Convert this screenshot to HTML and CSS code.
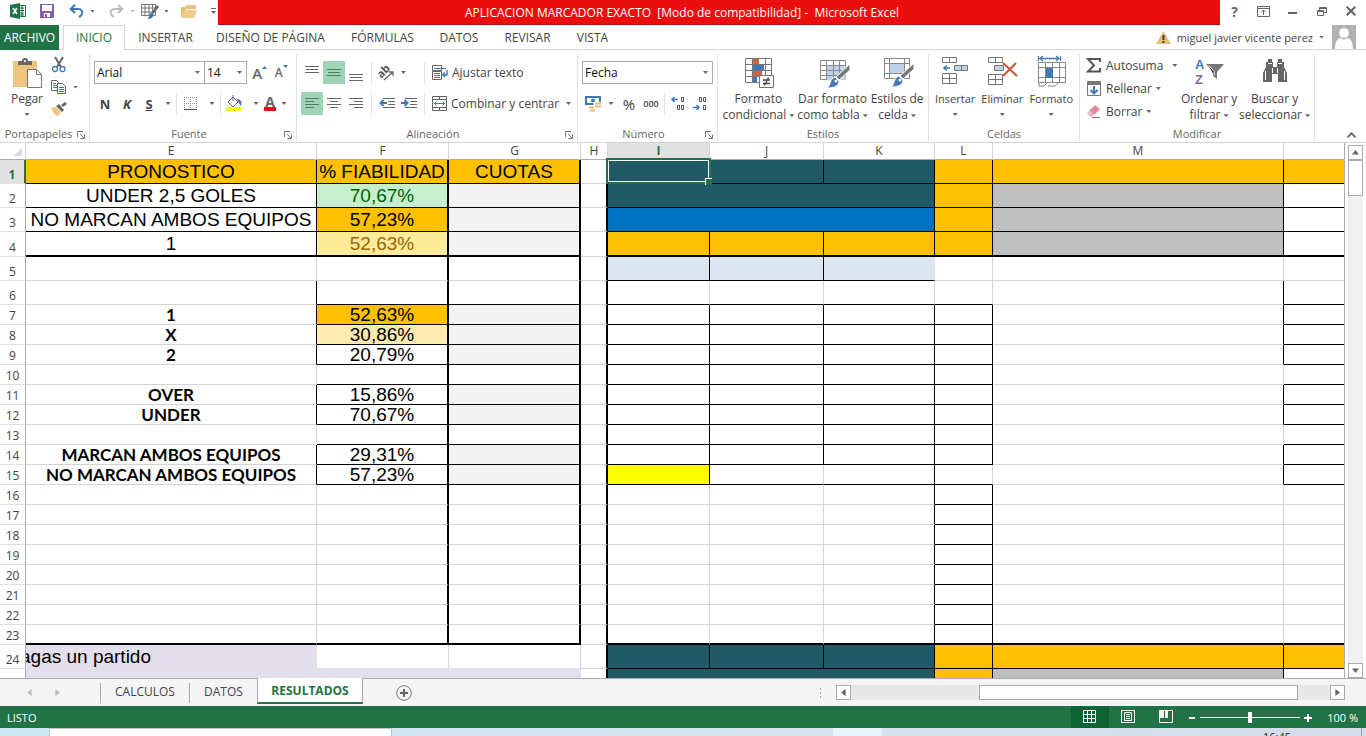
FILE: index.html
```html
<!DOCTYPE html>
<html lang="es">
<head>
<meta charset="utf-8">
<title>APLICACION MARCADOR EXACTO - Microsoft Excel</title>
<link rel="stylesheet" href="styles.css">
</head>
<body>
<div class="app">
  <header class="titlebar">
    <div class="qat">
      <button type="button" aria-label="Excel"><svg width="17" height="16" viewBox="0 0 17 16"><path fill="#fff" stroke="#217346" d="M8.500 2.500h7v11h-7z"/><path stroke="#217346" d="M10 5h4M10 7.500h4M10 10h4M10 12h4M12 3v10"/><path fill="#217346" d="M0 2l10-2v16L0 14z"/><path stroke="#fff" stroke-width="1.600" d="M3 5l4 6M7 5l-4 6"/></svg></button>
      <button type="button" aria-label="Guardar"><svg width="14" height="14" viewBox="0 0 14 14"><path fill="#8b5fa8" d="M0 0h14v14H0z"/><path fill="#fff" d="M2 1h10v6H2zM4 9h6v4H4z"/><path fill="#8b5fa8" d="M5 10h2v3H5z"/></svg></button>
      <button type="button" aria-label="Deshacer"><svg width="16" height="14" viewBox="0 0 16 14"><path fill="none" stroke="#3f78b5" stroke-width="2" d="M2 5h7c4 0 5 3 4 5s-3 3-3 3M6 .7L1.700 5 6 9"/></svg><i class="arr"></i></button>
      <button type="button" aria-label="Rehacer"><svg width="16" height="14" viewBox="0 0 16 14"><path fill="none" stroke="#bdbdbd" stroke-width="2" d="M13 5H6C2 5 1 8 2 10s3 3 3 3M9 .7L13.300 5 9 9"/></svg><i class="arr pale"></i></button>
      <button type="button" aria-label="Tabla"><svg width="18" height="17" viewBox="0 0 18 17"><path fill="#fff" stroke="#777" d="M.5 1.500h14v11H.5zM.5 5h14M.5 9h14M4 1.500v11M8 1.500v11M11.500 1.500v11"/><path fill="#666" d="M16 2l2 2-6 7-2-1z"/><path fill="#3f78b5" d="M9.500 10l3 1c0 4-3 5-6 5 2-1 1-4 3-6z"/></svg><i class="arr"></i></button>
      <button type="button" aria-label="Abrir"><svg width="17" height="13" viewBox="0 0 17 13"><path fill="#e9c078" d="M0 13V2h4l2-2h9v4H5z"/><path fill="#f0cd8d" d="M4 5h12l-3 8H0z"/></svg></button>
      <button type="button" aria-label="Personalizar"><svg width="6" height="8" viewBox="0 0 6 8"><path fill="#666" d="M0 1h5v1H0zM0 4h5L2.500 7z"/></svg></button>
    </div>
    <h1 class="title">APLICACION MARCADOR EXACTO&nbsp; [Modo de compatibilidad] -&nbsp; Microsoft Excel</h1>
    <div class="winbtns">
      <button type="button" class="help">?</button>
      <button type="button" aria-label="Opciones de cinta"><svg width="13" height="11" viewBox="0 0 13 11"><path fill="none" stroke="#666" d="M.5.5h12v10H.5zM.5 2.500h12M6.500 9V4M4 6.500L6.500 4 9 6.500"/></svg></button>
      <button type="button" aria-label="Minimizar"><svg width="10" height="10" viewBox="0 0 10 10"><path fill="#666" d="M0 6h9v2H0z"/></svg></button>
      <button type="button" aria-label="Restaurar"><svg width="10" height="10" viewBox="0 0 10 10"><path fill="none" stroke="#666" d="M.5 4.500h6v5h-6zM.5 5.500h6M2.500 4V1.500h7v5H7M2.500 2.500h7"/></svg></button>
      <button type="button" aria-label="Cerrar"><svg width="10" height="10" viewBox="0 0 10 10"><path stroke="#666" stroke-width="2" d="M.7.7l8.600 8.600M9.300.7L.7 9.300"/></svg></button>
    </div>
  </header>

  <nav class="tabs">
    <div class="tablist">
      <a class="file" href="#archivo">ARCHIVO</a>
      <a class="active" href="#inicio">INICIO</a>
      <a href="#insertar">INSERTAR</a>
      <a href="#diseno">DISEÑO DE PÁGINA</a>
      <a href="#formulas">FÓRMULAS</a>
      <a href="#datos">DATOS</a>
      <a href="#revisar">REVISAR</a>
      <a href="#vista">VISTA</a>
    </div>
    <div class="account">
      <svg width="15" height="13" viewBox="0 0 15 13"><path fill="#e8bf77" d="M7.500 0L15 13H0z"/><path fill="#444" d="M6.500 4h2v5h-2zM6.500 10h2v2h-2z"/></svg>
      <span>miguel javier vicente perez</span><i class="arr"></i>
      <svg class="avatar" width="24" height="24" viewBox="0 0 24 24"><path fill="#b1b1b1" d="M0 0h24v24H0z"/><circle cx="12" cy="8" r="5" fill="#fff"/><path fill="#fff" d="M3 24c0-8 3-11 6-11l3 2 3-2c3 0 6 3 6 11z"/></svg>
    </div>
  </nav>

  <section class="ribbon">
    <div class="group clip">
      <div class="body">
        <button type="button" class="big"><svg width="29" height="31" viewBox="0 0 29 31"><path fill="#ecc57f" d="M0 3h24v26H0z"/><path fill="#666" d="M5 7V3h4a3 3 0 0 1 6 0h4v4z"/><circle cx="12" cy="3" r="1" fill="#fff"/><path fill="#fff" stroke="#777" d="M14.500 11.500h9l5 5v13h-14zM23.500 11.500v5h5"/></svg><span>Pegar</span><i class="arr"></i></button>
        <div class="smalls">
          <button type="button" aria-label="Cortar"><svg width="16" height="16" viewBox="0 0 16 16"><path stroke="#666" stroke-width="2" d="M4 0l6 10M12 0L6 10"/><circle cx="4" cy="12" r="2.500" fill="none" stroke="#3f78b5" stroke-width="1.300"/><circle cx="11.500" cy="12" r="2.500" fill="none" stroke="#3f78b5" stroke-width="1.300"/></svg></button>
          <button type="button" aria-label="Copiar"><svg width="16" height="14" viewBox="0 0 16 14"><path fill="#fff" stroke="#666" d="M.5.5h5l2 2v8h-7z"/><path stroke="#3f78b5" d="M2 3.500h3M2 5.500h4M2 7.500h4"/><path fill="#fff" stroke="#666" d="M6.500 3.500h5l3 3v7h-8z"/><path stroke="#3f78b5" d="M8 7.500h5M8 9.500h5M8 11.500h5"/></svg><i class="arr"></i></button>
          <button type="button" aria-label="Copiar formato"><svg width="16" height="14" viewBox="0 0 16 14"><path fill="#edc680" d="M0 6l5-1 5 5-3 4-4-2z"/><path fill="#666" d="M5 4l3-2 5 6-2 2zM10 3l4-3 2 2-4 3z"/></svg></button>
        </div>
      </div>
      <div class="cap"><span>Portapapeles</span><svg class="launch" viewBox="0 0 8 8"><path fill="none" stroke="#777" d="M.5 6V.5H6M3 3l4 4M7.500 3.500v4h-4"/></svg></div>
    </div>

    <div class="group font">
      <div class="body rows">
        <div class="row combos">
          <label class="sel name"><select aria-label="Fuente"><option>Arial</option></select></label>
          <label class="sel size"><select aria-label="Tamaño"><option>14</option></select></label>
          <button type="button" class="grow" aria-label="Aumentar">A<svg width="5" height="3" viewBox="0 0 5 3"><path fill="#3f78b5" d="M0 3h5L2.500 0z"/></svg></button>
          <button type="button" class="grow less" aria-label="Disminuir">A<svg width="5" height="3" viewBox="0 0 5 3"><path fill="#3f78b5" d="M0 0h5L2.500 3z"/></svg></button>
        </div>
        <div class="row">
          <button type="button" class="ib"><b>N</b></button>
          <button type="button" class="ib"><b><em>K</em></b></button>
          <button type="button" class="ib"><b><u>S</u></b></button>
          <button type="button" class="ab"><i class="arr"></i></button>
          <span class="sep"></span>
          <button type="button" class="ib wide" aria-label="Bordes"><svg width="13" height="13" viewBox="0 0 13 13"><path fill="none" stroke="#888" stroke-dasharray="1 1" d="M.5 0v12M6.500 0v12M0 .5h13M0 6.500h13M12.500 0v12"/><path stroke="#555" d="M0 12.500h13"/></svg></button>
          <button type="button" class="ab"><i class="arr"></i></button>
          <span class="sep"></span>
          <button type="button" class="ib wide" aria-label="Relleno"><svg width="17" height="17" viewBox="0 0 17 17"><path fill="#fff" stroke="#666" d="M2 7l5-5 5 5-5 5zM7 6V0"/><path fill="#3f78b5" d="M11 4c4 0 5 3 4 7l-3-4z"/><path fill="#ffff28" d="M0 12h16v4H0z"/></svg></button>
          <button type="button" class="ab"><i class="arr"></i></button>
          <button type="button" class="fc" aria-label="Color de fuente">A</button>
          <button type="button" class="ab"><i class="arr"></i></button>
        </div>
      </div>
      <div class="cap"><span>Fuente</span><svg class="launch" viewBox="0 0 8 8"><path fill="none" stroke="#777" d="M.5 6V.5H6M3 3l4 4M7.500 3.500v4h-4"/></svg></div>
    </div>

    <div class="group align">
      <div class="body rows">
        <div class="row">
          <button type="button" class="ib" aria-label="Arriba"><svg width="14" height="16" viewBox="0 0 14 16"><path stroke="#666" d="M0 1.500h14M1 4.500h12M0 7.500h14"/></svg></button>
          <button type="button" class="ib on" aria-label="Medio"><svg width="14" height="16" viewBox="0 0 14 16"><path stroke="#557766" d="M0 4.500h14M1 7.500h12M0 10.500h14"/></svg></button>
          <button type="button" class="ib" aria-label="Abajo"><svg width="14" height="16" viewBox="0 0 14 16"><path stroke="#666" d="M0 9.500h14M1 12.500h12M0 15.500h14"/></svg></button>
          <span class="sep"></span>
          <button type="button" class="ori" aria-label="Orientación"><svg width="17" height="16" viewBox="0 0 17 16"><text x="0" y="10" transform="rotate(-45 6 8)" font-size="11" font-weight="700" fill="#555">ab</text><path fill="none" stroke="#666" stroke-width="1.300" d="M6 15l9-8M11 7h4v4"/></svg><i class="arr"></i></button>
          <span class="sep"></span>
          <button type="button" class="txt"><svg width="16" height="16" viewBox="0 0 16 16"><path fill="#fff" stroke="#666" d="M.5 5.500v-5h9v5zM.5 6.500h9v8h-9z"/><path stroke="#3f78b5" d="M2 3.500h12M2 8.500h6M2 10.500h6M2 12.500h6"/><path fill="none" stroke="#3f78b5" stroke-width="1.400" d="M15 5v5h-4M13 7.500L10.700 10l2.300 2"/></svg>Ajustar texto</button>
        </div>
        <div class="row">
          <button type="button" class="ib on" aria-label="Izquierda"><svg width="14" height="11" viewBox="0 0 14 11"><path stroke="#557766" d="M0 .5h14M0 3.500h9M0 6.500h14M0 9.500h9"/></svg></button>
          <button type="button" class="ib" aria-label="Centro"><svg width="14" height="11" viewBox="0 0 14 11"><path stroke="#666" d="M0 .5h14M3 3.500h8M0 6.500h14M3 9.500h8"/></svg></button>
          <button type="button" class="ib" aria-label="Derecha"><svg width="14" height="11" viewBox="0 0 14 11"><path stroke="#666" d="M0 .5h14M5 3.500h9M0 6.500h14M5 9.500h9"/></svg></button>
          <span class="sep"></span>
          <button type="button" class="ib" aria-label="Disminuir sangría"><svg width="16" height="11" viewBox="0 0 16 11"><path stroke="#666" d="M4 .5h12M9 3.500h7M9 6.500h7M4 9.500h12"/><path fill="none" stroke="#3f78b5" stroke-width="2" d="M8 5H2M4.500 2L1.500 5l3 3"/></svg></button>
          <button type="button" class="ib" aria-label="Aumentar sangría"><svg width="16" height="11" viewBox="0 0 16 11"><path stroke="#666" d="M4 .5h12M9 3.500h7M9 6.500h7M4 9.500h12"/><path fill="none" stroke="#3f78b5" stroke-width="2" d="M0 5h6M3.500 2l3 3-3 3"/></svg></button>
          <span class="sep"></span>
          <button type="button" class="txt"><svg width="15" height="15" viewBox="0 0 15 15"><path fill="none" stroke="#666" d="M.5.5h14v14H.5zM.5 3.500h14M.5 11.500h14M7.500.5v3M7.500 11.500v3"/><path fill="none" stroke="#3f78b5" d="M2 7.500h11M4.500 5.500l-2 2 2 2M10.500 5.500l2 2-2 2"/></svg>Combinar y centrar<i class="arr"></i></button>
        </div>
      </div>
      <div class="cap"><span>Alineación</span><svg class="launch" viewBox="0 0 8 8"><path fill="none" stroke="#777" d="M.5 6V.5H6M3 3l4 4M7.500 3.500v4h-4"/></svg></div>
    </div>

    <div class="group num">
      <div class="body rows">
        <div class="row"><label class="sel fmt"><select aria-label="Formato de número"><option>Fecha</option></select></label></div>
        <div class="row">
          <button type="button" class="ib" aria-label="Moneda"><svg width="17" height="16" viewBox="0 0 17 16"><path fill="#fff" stroke="#3f78b5" stroke-width="2" d="M1 1h14v7H1z"/><circle cx="8" cy="4.500" r="2" fill="#3f78b5"/><path fill="#fff" d="M8 6h9v3H5v7h5z"/><path stroke="#e6b970" stroke-width="2" d="M10 7.500h6M10 10.500h6M4 11.500h5M5 14.500h5"/></svg></button>
          <button type="button" class="ab"><i class="arr"></i></button>
          <button type="button" class="ib pct">%</button>
          <button type="button" class="ib mil">000</button>
          <span class="sep"></span>
          <button type="button" class="ib dec" aria-label="Aumentar decimales"><svg width="15" height="15" viewBox="0 0 15 15"><path fill="none" stroke="#3f78b5" stroke-width="1.500" d="M7 3.500H1M3.500 1L1 3.500 3.500 6"/><path fill="none" stroke="#555" d="M10.500 1.500h2v4h-2zM6.500 9.500h2v4h-2zM10.500 9.500h2v4h-2z"/></svg></button>
          <button type="button" class="ib dec" aria-label="Disminuir decimales"><svg width="15" height="15" viewBox="0 0 15 15"><path fill="none" stroke="#3f78b5" stroke-width="1.500" d="M0 11.500h6M3.500 9L6 11.500 3.500 14"/><path fill="none" stroke="#555" d="M6.500 1.500h2v4h-2zM10.500 1.500h2v4h-2zM10.500 9.500h2v4h-2z"/></svg></button>
        </div>
      </div>
      <div class="cap"><span>Número</span><svg class="launch" viewBox="0 0 8 8"><path fill="none" stroke="#777" d="M.5 6V.5H6M3 3l4 4M7.500 3.500v4h-4"/></svg></div>
    </div>

    <div class="group styles">
      <div class="body">
        <button type="button" class="big"><svg width="31" height="31" viewBox="0 0 31 31"><path fill="#fff" stroke="#777" d="M1.500.5h26v24h-26zM1.500 6.500h26M1.500 12.500h26M1.500 18.500h26M8.500.5v24M21.500.5v24"/><path fill="#cf6347" d="M9 1h6v5H9zM9 13h9v5H9z"/><path fill="#3f78b5" d="M9 7h11v5H9zM9 19h4v5H9z"/><path fill="#fff" stroke="#777" d="M15.500 17.500h14v12h-14z"/><path stroke="#444" stroke-width="1.300" d="M19 22h7M19 25.500h7M24.500 19.500l-4 8"/></svg><span>Formato</span><span>condicional <i class="arr"></i></span></button>
        <button type="button" class="big"><svg width="31" height="31" viewBox="0 0 31 31"><path fill="#fff" stroke="#888" d="M1.500 2.500h25v19h-25z"/><path fill="#bdd2e8" d="M8 8h19v14H8z"/><path fill="none" stroke="#888" d="M1.500 7.500h25M1.500 12.500h25M1.500 17.500h25M7.500 2.500v19M14.500 2.500v19M20.500 2.500v19"/><path fill="#777" stroke="#fff" d="M31 6v6L20 22l-3-3z"/><path fill="#3f78b5" stroke="#fff" d="M16 19l4 4c0 5-5 7-12 7 4-2 2-9 8-11z"/><circle cx="17" cy="23" r="1.500" fill="#fff"/></svg><span>Dar formato</span><span>como tabla <i class="arr"></i></span></button>
        <button type="button" class="big"><svg width="31" height="31" viewBox="0 0 31 31"><path fill="#fff" stroke="#888" d="M1.500.5h25v20h-25zM1.500 5.500h25M1.500 15.500h25M6.500.5v20M21.500.5v20"/><path fill="#bdd2e8" d="M7 6h14v9H7z"/><path fill="#777" stroke="#fff" d="M31 5v6L20 21l-3-3z"/><path fill="#3f78b5" stroke="#fff" d="M16 18l4 4c0 5-5 7-12 7 4-2 2-9 8-11z"/><circle cx="17" cy="22" r="1.500" fill="#fff"/></svg><span>Estilos de</span><span>celda <i class="arr"></i></span></button>
      </div>
      <div class="cap"><span>Estilos</span></div>
    </div>

    <div class="group cells">
      <div class="body">
        <button type="button" class="big"><svg width="28" height="31" viewBox="0 0 28 31"><path fill="none" stroke="#777" d="M1.500 1.500h14v5h-14zM8.500 1.500v5M1.500 17.500h14v10h-14zM1.500 22.500h14M8.500 17.500v10"/><path fill="#bdd2e8" stroke="#777" d="M13.500 9.500h13v5h-13zM20.500 9.500v5"/><path fill="none" stroke="#3f78b5" stroke-width="1.600" d="M9 12H3M6 9.500L3 12l3 2.500"/></svg><span>Insertar</span><i class="arr"></i></button>
        <button type="button" class="big"><svg width="32" height="31" viewBox="0 0 32 31"><path fill="none" stroke="#777" d="M2.500 1.500h14v5h-14zM9.500 1.500v5M2.500 18.500h14v10h-14zM2.500 23.500h14M9.500 18.500v10"/><path fill="#bdd2e8" stroke="#777" d="M8.500 9.500h9v5h-9z"/><path stroke="#cf5237" stroke-width="2" d="M17 7l14 13M30 7L17 20"/></svg><span>Eliminar</span><i class="arr"></i></button>
        <button type="button" class="big"><svg width="29" height="31" viewBox="0 0 29 31"><path fill="none" stroke="#3f78b5" stroke-width="1.300" d="M1.500 0v5M23.500 0v5M3 2.500h19M6 0L3 2.500 6 5M19 0l3 2.500L19 5"/><path fill="#fff" stroke="#888" d="M1.500 6.500h27v20h-27zM1.500 11.500h27M1.500 21.500h27M8.500 6.500v20M15.500 6.500v20M22.500 6.500v20"/><path fill="#3f78b5" d="M9 12h7v10H9z"/><path fill="none" stroke="#888" d="M2 27v3h5l3-3M11 30h7l3-3"/></svg><span>Formato</span><i class="arr"></i></button>
      </div>
      <div class="cap"><span>Celdas</span></div>
    </div>

    <div class="group edit">
      <div class="body">
        <div class="list">
          <button type="button"><svg width="16" height="15" viewBox="0 0 16 15"><path fill="none" stroke="#555" stroke-width="2" d="M14 4V1H2l6 6.500L2 13.500h12V10"/></svg>Autosuma<i class="arr far"></i></button>
          <button type="button"><svg width="16" height="15" viewBox="0 0 16 15"><path fill="#fff" stroke="#777" d="M1.500.5h13v14h-13z"/><path fill="#777" d="M2 1h12v3H2z"/><path fill="none" stroke="#3f78b5" stroke-width="2" d="M8 5v7M4.500 9L8 12.500 11.500 9"/></svg>Rellenar<i class="arr"></i></button>
          <button type="button"><svg width="16" height="15" viewBox="0 0 16 15"><path fill="#e58c9c" d="M3 7L9 1l5 4-6 6z"/><path fill="#f0bcc6" d="M1 9l2-2 5 4-2 2H4z"/><path stroke="#777" d="M6 13.500h8"/></svg>Borrar<i class="arr"></i></button>
        </div>
        <button type="button" class="big"><svg class="az" width="30" height="31" viewBox="0 0 30 31"><text x="1" y="13" fill="#3f78b5">A</text><text x="1" y="28" fill="#8b5fa8">Z</text><path fill="#777" d="M12 8h18l-7 8v7l-4-3v-4z"/><path stroke="#fff" d="M15 9.500l5 6v4"/></svg><span>Ordenar y</span><span>filtrar <i class="arr"></i></span></button>
        <button type="button" class="big"><svg width="28" height="31" viewBox="0 0 28 31"><path fill="#666" d="M7 3h4v3h1v5h4V6h1V3h4v3h2v5l3 6v9h-9v-8h-6v8H2v-9l3-6V6h2z"/><path stroke="#fff" d="M7 7.500h4M17 7.500h4M4.500 15v9M23.500 15v9M11.500 12v5M16.500 12v5"/></svg><span>Buscar y</span><span>seleccionar <i class="arr"></i></span></button>
      </div>
      <div class="cap"><span>Modificar</span></div>
    </div>
    <button type="button" class="collapse" aria-label="Contraer"><svg width="9" height="6" viewBox="0 0 9 6"><path fill="none" stroke="#666" stroke-width="1.800" d="M.5 5.300l4-4 4 4"/></svg></button>
  </section>

  <main class="work">
    <div class="sheet">
      <table>
        <colgroup><col class="cr"><col class="ce"><col class="cf"><col class="cf"><col class="ch"><col class="ci"><col class="cj"><col class="ck"><col class="cl"><col class="ce"><col></colgroup>
        <thead><tr><th class="corner"></th><th>E</th><th>F</th><th>G</th><th>H</th><th class="cur">I</th><th>J</th><th>K</th><th>L</th><th>M</th><th></th></tr></thead>
        <tbody class="box tall">
          <tr><th class="cur">1</th><td class="rb or">PRONOSTICO</td><td class="b or">% FIABILIDAD</td><td class="b or">CUOTAS</td><td></td><td class="b teal pick"><span class="cursor"></span></td><td class="rb teal"></td><td class="rb teal"></td><td class="rb or"></td><td class="rb or"></td><td class="b or"></td></tr>
          <tr><th>2</th><td class="rb">UNDER 2,5 GOLES</td><td class="b good">70,67%</td><td class="b soft"></td><td></td><td class="rb teal" colspan="3"></td><td class="rb or"></td><td class="rb gray"></td><td class="b"></td></tr>
          <tr><th>3</th><td class="rb">NO MARCAN AMBOS EQUIPOS</td><td class="b or">57,23%</td><td class="b soft"></td><td></td><td class="rb blue" colspan="3"></td><td class="rb or"></td><td class="rb gray"></td><td class="b"></td></tr>
          <tr class="heavy"><th>4</th><td class="r">1</td><td class="mid">52,63%</td><td class="soft"></td><td></td><td class="r or"></td><td class="r or"></td><td class="r or"></td><td class="r or"></td><td class="r gray"></td><td></td></tr>
          <tr><th>5</th><td></td><td></td><td></td><td></td><td class="rb ice"></td><td class="rb ice"></td><td class="b ice nr"></td><td></td><td></td><td></td></tr>
          <tr><th>6</th><td class="r"></td><td class="b"></td><td class="b"></td><td></td><td class="b"></td><td class="b"></td><td class="b"></td><td class="b"></td><td class="r"></td><td class="b"></td></tr>
        </tbody>
        <tbody class="box">
          <tr><th>7</th><td class="r cal">1</td><td class="b or">52,63%</td><td class="b soft"></td><td></td><td class="rb"></td><td class="rb"></td><td class="rb"></td><td class="rb"></td><td class="r"></td><td class="b"></td></tr>
          <tr><th>8</th><td class="r cal">X</td><td class="b cream">30,86%</td><td class="b soft"></td><td></td><td class="rb"></td><td class="rb"></td><td class="rb"></td><td class="rb"></td><td class="r"></td><td class="b"></td></tr>
          <tr><th>9</th><td class="r cal">2</td><td class="b">20,79%</td><td class="b soft"></td><td></td><td class="rb"></td><td class="rb"></td><td class="rb"></td><td class="rb"></td><td class="r"></td><td class="b"></td></tr>
          <tr><th>10</th><td></td><td class="b"></td><td class="b"></td><td></td><td class="rb"></td><td class="rb"></td><td class="rb"></td><td class="rb"></td><td></td><td class="b"></td></tr>
          <tr><th>11</th><td class="r cal">OVER</td><td class="b">15,86%</td><td class="b soft"></td><td></td><td class="rb"></td><td class="rb"></td><td class="rb"></td><td class="rb"></td><td class="r"></td><td class="b"></td></tr>
          <tr><th>12</th><td class="r cal">UNDER</td><td class="b">70,67%</td><td class="b soft"></td><td></td><td class="rb"></td><td class="rb"></td><td class="rb"></td><td class="rb"></td><td class="r"></td><td class="b"></td></tr>
          <tr><th>13</th><td></td><td class="b"></td><td class="b"></td><td></td><td class="rb"></td><td class="rb"></td><td class="rb"></td><td class="rb"></td><td></td><td class="b"></td></tr>
          <tr><th>14</th><td class="r cal">MARCAN AMBOS EQUIPOS</td><td class="b">29,31%</td><td class="b soft"></td><td></td><td class="rb"></td><td class="rb"></td><td class="rb"></td><td class="rb"></td><td class="r"></td><td class="b"></td></tr>
          <tr><th>15</th><td class="r cal">NO MARCAN AMBOS EQUIPOS</td><td class="b">57,23%</td><td class="b soft"></td><td></td><td class="rb yellow"></td><td class="b"></td><td class="rb"></td><td class="b"></td><td class="r"></td><td class="b"></td></tr>
          <tr><th>16</th><td></td><td></td><td></td><td></td><td></td><td></td><td class="r"></td><td class="rb"></td><td></td><td></td></tr>
          <tr><th>17</th><td></td><td></td><td></td><td></td><td></td><td></td><td class="r"></td><td class="rb"></td><td></td><td></td></tr>
          <tr><th>18</th><td></td><td></td><td></td><td></td><td></td><td></td><td class="r"></td><td class="rb"></td><td></td><td></td></tr>
          <tr><th>19</th><td></td><td></td><td></td><td></td><td></td><td></td><td class="r"></td><td class="rb"></td><td></td><td></td></tr>
          <tr><th>20</th><td></td><td></td><td></td><td></td><td></td><td></td><td class="r"></td><td class="rb"></td><td></td><td></td></tr>
          <tr><th>21</th><td></td><td></td><td></td><td></td><td></td><td></td><td class="r"></td><td class="rb"></td><td></td><td></td></tr>
          <tr><th>22</th><td></td><td></td><td></td><td></td><td></td><td></td><td class="r"></td><td class="rb"></td><td></td><td></td></tr>
          <tr class="heavy"><th>23</th><td></td><td></td><td></td><td></td><td></td><td></td><td class="r"></td><td class="r"></td><td></td><td></td></tr>
        </tbody>
        <tbody class="tall foot">
          <tr><th>24</th><td class="lav spill">agas un partido</td><td class="nb"></td><td class="nb"></td><td></td><td class="rb teal"></td><td class="rb teal"></td><td class="rb teal"></td><td class="rb or"></td><td class="rb or"></td><td class="b or"></td></tr>
          <tr><th></th><td class="lav" colspan="3"></td><td></td><td class="r teal" colspan="3"></td><td class="r or"></td><td class="r gray"></td><td></td></tr>
        </tbody>
      </table>
    </div>
    <div class="vscroll">
      <button type="button" aria-label="Subir"><i class="tri up"></i></button>
      <div class="vthumb"></div>
      <button type="button" class="end" aria-label="Bajar"><i class="tri down"></i></button>
    </div>
  </main>

  <div class="sheetbar">
    <div class="navs"><button type="button" aria-label="Anterior"><i class="tri left"></i></button><button type="button" aria-label="Siguiente"><i class="tri right"></i></button></div>
    <a class="stab calc" href="#calculos">CALCULOS</a>
    <a class="stab dat" href="#datos">DATOS</a>
    <a class="stab res" href="#resultados">RESULTADOS</a>
    <button type="button" class="add" aria-label="Hoja nueva"><svg width="16" height="16" viewBox="0 0 16 16"><circle cx="8" cy="8" r="7.300" fill="none" stroke="#777"/><path stroke="#666" stroke-width="2" d="M8 4v8M4 8h8"/></svg></button>
    <div class="hscroll">
      <span class="dots"></span>
      <button type="button" aria-label="Izquierda"><i class="tri left"></i></button>
      <div class="htrack"><div class="hthumb"></div></div>
      <button type="button" aria-label="Derecha"><i class="tri right"></i></button>
    </div>
  </div>

  <footer class="status">
    <span class="ready">LISTO</span>
    <div class="views">
      <button type="button" class="on" aria-label="Normal"><svg width="14" height="14" viewBox="0 0 14 14"><path fill="none" stroke="#fff" d="M.5.5h12v12H.5zM.5 4.500h12M.5 8.500h12M4.500.5v12M8.500.5v12"/></svg></button>
      <button type="button" aria-label="Diseño de página"><svg width="14" height="14" viewBox="0 0 14 14"><path fill="none" stroke="#fff" d="M.5.5h13v12H.5zM3.500 2.500h7v8h-7zM5 4.500h4M5 6.500h4M5 8.500h4"/></svg></button>
      <button type="button" aria-label="Salto de página"><svg width="14" height="14" viewBox="0 0 14 14"><path fill="none" stroke="#fff" d="M.5.5h13v12H.5z"/><path fill="#e6f2ea" d="M1 1h4v7H1zM6 1h3v7H6z"/></svg></button>
    </div>
    <button type="button" class="zb" aria-label="Alejar"><svg width="9" height="9" viewBox="0 0 9 9"><path fill="#fff" d="M2 4h6v2H2z"/></svg></button>
    <input type="range" class="zoom" min="0" max="100" value="50" aria-label="Zoom">
    <button type="button" class="zb" aria-label="Acercar"><svg width="9" height="9" viewBox="0 0 9 9"><path fill="#fff" d="M0 4h8v2H0zM3 1h2v8H3z"/></svg></button>
    <span class="pc">100 %</span>
  </footer>
  <div class="taskbar"><div class="search"></div><div class="lit"></div><time>16:45</time><div class="edge"></div></div>
</div>
</body>
</html>
```

FILE: styles.css
```css
* { box-sizing: border-box; }
html, body { margin: 0; height: 100%; }
body { font-family: "Open Sans", "Noto Sans", sans-serif; font-size: 12px; color: #444; background: #fff; overflow: hidden; }
button, select { font: inherit; color: inherit; background: none; border: 0; padding: 0; margin: 0; }
button { display: flex; align-items: center; justify-content: center; white-space: nowrap; }
a { color: inherit; text-decoration: none; }
svg { flex: none; display: block; overflow: visible; }
.app { display: flex; flex-direction: column; height: 100vh; }

.arr { display: inline-block; flex: none; width: 5px; height: 3px; background: #666; clip-path: polygon(0 0, 100% 0, 50% 100%); vertical-align: middle; }
.arr.pale { background: #bdbdbd; }

/* title bar */
.titlebar { display: flex; flex: none; height: 25px; }
.qat { display: grid; flex: none; width: 218px; padding: 0 0 3px 10px; grid-template-columns: 30px 29px 40px 32px 40px 30px 7px; align-items: center; }
.qat button { justify-content: flex-start; gap: 5px; }
.title { flex: 1; margin: 0; background: #ea0e0e; border-bottom: 1px solid #b01010; color: #fff; font-size: 12px; font-weight: 400; line-height: 25px; text-align: center; padding-right: 74px; white-space: nowrap; }
.winbtns { display: flex; flex: none; width: 146px; padding: 0 1px 3px 0; align-items: center; }
.winbtns button { width: 29px; }
.help { font-size: 14px; font-weight: 700; color: #666; }

/* tabs */
.tabs { display: flex; flex: none; justify-content: space-between; height: 25px; border-bottom: 1px solid #d4d4d4; }
.tablist { display: grid; grid-template-columns: 59px 70px 73px 137px 87px 66px 71px 59px; line-height: 25px; white-space: nowrap; text-align: center; }
.tablist a { height: 25px; }
.tablist .file { background: #217346; color: #fff; }
.tablist .active { margin: 0 4px; border: 1px solid #d4d4d4; border-bottom: 0; background: #fff; color: #217346; line-height: 24px; }
.account { display: flex; align-items: center; gap: 6px; padding-right: 10px; white-space: nowrap; font-size: 11px; }
.account .avatar { margin-left: 2px; }

/* ribbon */
.ribbon { display: flex; flex: none; height: 93px; border-bottom: 1px solid #d4d4d4; padding: 4px 0 1px; }
.group { display: flex; flex: none; flex-direction: column; border-right: 1px solid #e1e1e1; }
.clip { width: 90px; }
.font { width: 207px; }
.align { width: 281px; }
.num { width: 140px; }
.styles { width: 211px; }
.cells { width: 151px; }
.edit { width: 235px; }
.body { display: flex; flex: 1; min-height: 0; }
.cap { display: flex; flex: none; height: 14px; line-height: 14px; font-size: 11px; color: #666; align-items: center; padding: 0 4px; }
.cap span { flex: 1; text-align: center; }
.clip .cap { padding-left: 0; }
.launch { width: 8px; height: 8px; margin-top: 2px; }
.big { flex-direction: column; justify-content: flex-start; line-height: 16px; padding-top: 4px; }
.big svg { margin-bottom: 2px; }
.big > .arr { margin-top: 6px; }
.clip .big { width: 46px; padding-left: 8px; }
.smalls { display: grid; grid-template-rows: 22px 22px 22px; padding: 0 0 0 5px; }
.smalls button { justify-content: flex-start; gap: 6px; }

.rows { flex-direction: column; gap: 8px; padding: 7px 4px 0; }
.row { display: flex; align-items: center; height: 23px; flex: none; }
.sel { position: relative; display: block; flex: none; height: 23px; border: 1px solid #ababab; }
.sel select { appearance: none; width: 100%; height: 21px; padding-left: 2px; color: #111; }
.sel::after { content: ""; position: absolute; right: 4px; top: 9px; width: 5px; height: 3px; background: #666; clip-path: polygon(0 0, 100% 0, 50% 100%); pointer-events: none; }
.name { width: 111px; }
.size { width: 43px; margin-left: -1px; }
.fmt { width: 131px; }
.grow { width: 22px; font-size: 15px; font-weight: 600; color: #666; align-items: flex-start; line-height: 22px; margin-left: 2px; }
.grow svg { margin-top: 4px; }
.less { font-size: 12px; line-height: 24px; margin-left: 0; }
.ib { width: 22px; height: 23px; flex: none; font-size: 13px; }
.ib.on { background: #9fd5b7; }
.ib.wide { width: 27px; }
.ab { width: 16px; flex: none; height: 23px; }
.sep { width: 1px; height: 22px; background: #e1e1e1; flex: none; }
.fc { width: 18px; height: 15px; border-bottom: 4px solid #ea0e0e; font-size: 14px; font-weight: 700; line-height: 10px; color: #666; }
.align .sep { margin: 0 4px; }
.ori { gap: 6px; width: 44px; justify-content: flex-start; padding-left: 2px; }
.txt { gap: 4px; margin-left: 3px; }
.txt .arr { margin-left: 3px; }
.num .ab { width: 14px; }
.pct { font-size: 15px; }
.mil { font-size: 9px; font-weight: 600; }
.num .sep { margin: 0 2px; }

.styles .body { padding: 0 3px; }
.styles .big { flex: 1 1 auto; }
.styles .big svg { margin: 0 0 2px 3px; }
.cells .body { padding: 0 6px; justify-content: space-between; font-size: 11px; }
.cells .big { padding-top: 2px; }
.cells .big svg, .edit .big svg { margin-bottom: 4px; }
.edit .body { padding: 0 3px 0 6px; }
.list { display: grid; flex: none; width: 94px; grid-template-rows: 23px 23px 23px; }
.list button { justify-content: flex-start; gap: 4px; }
.list .far { margin-left: 5px; }
.edit .big { flex: 1 1 auto; padding-top: 2px; }
.az { font-family: "Liberation Sans", Arial, sans-serif; font-size: 13px; font-weight: 700; }
.collapse { margin-left: auto; align-self: flex-end; width: 30px; height: 12px; }

/* worksheet */
.work { display: flex; flex: 1; min-height: 0; }
.sheet { flex: 1; min-width: 0; overflow: hidden; border-right: 1px solid #ababab; }
table { width: 100%; table-layout: fixed; border-collapse: separate; border-spacing: 0; }
.cr { width: 26px; } .ce { width: 291px; } .cf { width: 132px; } .ch { width: 27px; }
.ci { width: 102px; } .cj { width: 114px; } .ck { width: 111px; } .cl { width: 58px; }
th, td { padding: 0; white-space: nowrap; text-align: center; border-right: 1px solid #d4d4d4; border-bottom: 1px solid #d4d4d4; }
th { font-weight: 400; font-size: 12px; }
thead th { height: 17px; line-height: 16px; border-bottom-color: #ababab; }
.corner { background: linear-gradient(135deg, transparent 50%, #dcdcdc 50%) 13px 4px / 9px 9px no-repeat; }
th.cur { background: #e1e1e1; color: #217346; font-weight: 700; }
tbody th { border-right-color: #ababab; border-bottom-color: #e1e1e1; vertical-align: bottom; line-height: 17px; }
tbody th.cur { border-right: 2px solid #217346; }
tbody td { height: 20px; line-height: 19px; font-family: "Liberation Sans", Arial, sans-serif; font-size: 19px; color: #000; }
.tall td { height: 24px; line-height: 23px; }
.tall .heavy td { height: 25px; }
.box td:nth-child(3), .box td:nth-child(4), td:nth-child(5) { border-right: 2px solid #000; }
td.b { border-bottom-color: #000; }
td.r { border-right-color: #000; }
td.rb { border-right-color: #000; border-bottom-color: #000; }
.heavy td { border-bottom: 2px solid #000; }
.heavy td:nth-child(5) { border-bottom: 1px solid #d4d4d4; }
.box:not(.tall) .heavy td { line-height: 18px; }
tr > :last-child { border-right: 0; }
td.nr { border-right-color: #dce6f1; }
td.nb { border-bottom-color: #e4dfec; }
.foot tr:last-child td:nth-child(3) { border-right: 2px solid #000; }
.foot tr:last-child td:nth-child(5) { border-right: 1px solid #000; }
.cal { font-family: Lato, sans-serif; font-weight: 700; font-size: 17px; }
.or { background: #ffc000; }
td.good { background: #c6efce; color: #006100; }
td.mid { background: #ffeb9c; color: #9c6500; }
.cream { background: #ffebaf; }
.soft { background: #f2f2f2; }
.teal { background: #215967; }
.blue { background: #0070c0; }
.gray { background: #bfbfbf; }
.ice { background: #dce6f1; }
.yellow { background: #ffff00; }
td.lav { background: #e4dfec; border-color: #e4dfec; }
.spill { text-align: left; text-indent: -6px; overflow: hidden; }
.pick { position: relative; }
.cursor { position: absolute; inset: -2px -2px -1px -2px; border: 2px solid #217346; box-shadow: inset 0 0 0 1px #fff; }
.cursor::after { content: ""; position: absolute; right: -3px; bottom: -3px; width: 6px; height: 6px; background: #217346; border: solid #fff; border-width: 1px 0 0 1px; }

.tri { width: 7px; height: 7px; background: #666; }
.up { clip-path: polygon(0 80%, 50% 15%, 100% 80%); }
.down { clip-path: polygon(0 20%, 100% 20%, 50% 85%); }
.left { clip-path: polygon(80% 0, 80% 100%, 15% 50%); }
.right { clip-path: polygon(20% 0, 20% 100%, 85% 50%); }
.vscroll { display: flex; flex: none; flex-direction: column; width: 15px; margin: 2px 3px 0; background: #f1f1f1; }
.vscroll button, .hscroll button { width: 15px; height: 15px; flex: none; border: 1px solid #ababab; background: #fff; }
.vthumb { height: 36px; border: 1px solid #ababab; background: #fff; }
.vscroll .end { margin-top: auto; }

/* sheet tabs */
.sheetbar { display: flex; flex: none; height: 28px; background: #f5f5f5; border-top: 1px solid #ababab; align-items: center; }
.navs { display: flex; width: 100px; padding-left: 26px; gap: 21px; }
.navs .tri { background: #bdbdbd; }
.stab { height: 20px; line-height: 18px; text-align: center; border-left: 1px solid #ababab; }
.calc { width: 89px; }
.dat { width: 68px; }
.res { width: 106px; height: 26px; margin-top: -3px; line-height: 26px; background: #fff; border-right: 1px solid #ababab; border-bottom: 2px solid #217346; color: #217346; font-weight: 700; }
.add { margin-left: 33px; }
.hscroll { display: flex; align-items: center; margin-left: auto; width: 527px; margin-right: 21px; }
.dots { width: 5px; height: 12px; margin-right: 13px; background: radial-gradient(circle, #aaa 1px, transparent 1px) 0 0 / 5px 4px; }
.htrack { flex: 1; display: flex; justify-content: flex-end; height: 15px; background: #e8e8e8; padding-right: 32px; }
.hthumb { width: 319px; border: 1px solid #ababab; background: #fff; }

/* status bar */
.status { display: flex; flex: none; height: 22px; align-items: center; background: #217346; color: #fff; font-size: 11px; padding: 0 8px 0 7px; }
.ready { flex: 1; }
.views { display: flex; margin-right: 2px; }
.views button { width: 38px; height: 22px; }
.views .on { background: #0e6334; }
.zb { width: 9px; height: 22px; }
.zoom { appearance: none; width: 100px; height: 12px; margin: 0 4px; background: linear-gradient(#fff, #fff) 0 6px / 100% 1px no-repeat; }
.zoom::-webkit-slider-thumb { appearance: none; width: 4px; height: 11px; background: #fff; }
.pc { width: 45px; text-align: right; }

.taskbar { display: flex; flex: none; height: 8px; overflow: hidden; background: linear-gradient(90deg, #cde6f0, #d3e2ee 60%, #d6dce8); }
.search { width: 343px; margin-left: 49px; background: #fff; border: 1px solid #bcc5ca; border-bottom: 0; }
.lit { width: 49px; margin-left: 441px; background: #e9f2f8; }
.taskbar time { margin-left: auto; color: #222; font-size: 11px; line-height: 18px; padding-right: 70px; }
.edge { width: 5px; border-left: 1px solid #9aa5b0; }
```
